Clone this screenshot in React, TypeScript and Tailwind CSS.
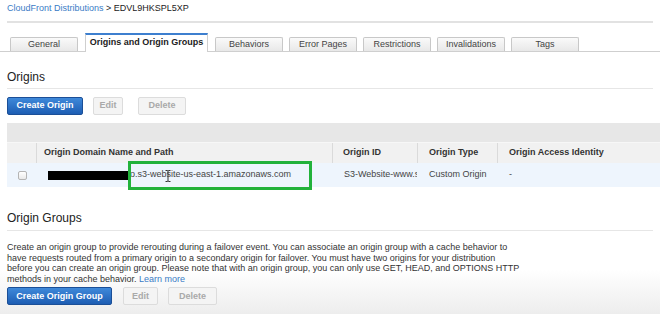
import { Fragment } from 'react';

const tabs = ['General', 'Origins and Origin Groups', 'Behaviors', 'Error Pages', 'Restrictions', 'Invalidations', 'Tags'];

function Tabs() {
  return (
    <div className="flex items-end h-[19px] border-b border-[#cfcfcf] pl-[10px] gap-[6px]">
      {tabs.map((tab, i) =>
        i === 1 ? (
          <div
            key={tab}
            className="w-[123px] h-[19px] -mb-px mx-[1px] flex items-center justify-center bg-white border-x border-[#cfcfcf] border-t-2 border-t-[#3d7fcf] font-bold text-[#222] pb-[1px]"
          >
            {tab}
          </div>
        ) : (
          <div
            key={tab}
            className="w-[68px] h-[14px] flex items-center justify-center border border-b-0 border-[#c8c8c8] rounded-t-[2px] bg-gradient-to-b from-[#fafafa] to-[#e8e8e8] text-[#444]"
          >
            {tab}
          </div>
        )
      )}
    </div>
  );
}

function Buttons({ create, widths }: { create: string; widths: [number, number, number, number, number] }) {
  // widths: create, gap, edit, gap, delete
  return (
    <div className="flex items-center h-[18px]">
      <button
        style={{ width: widths[0] }}
        className="h-[18px] rounded-[2px] border border-[#1b4f97] bg-gradient-to-b from-[#3f89da] to-[#1d5db3] text-white font-bold text-[9px]"
      >
        {create}
      </button>
      <button
        style={{ width: widths[2], marginLeft: widths[1] }}
        className="h-[18px] rounded-[2px] border border-[#dcdcdc] bg-[#f4f4f4] text-[#a9a9a9] font-bold text-[9px]"
      >
        Edit
      </button>
      <button
        style={{ width: widths[4], marginLeft: widths[3] }}
        className="h-[18px] rounded-[2px] border border-[#dcdcdc] bg-[#f4f4f4] text-[#a9a9a9] font-bold text-[9px]"
      >
        Delete
      </button>
    </div>
  );
}

function OriginsTable() {
  return (
    <div className="ml-[7px] mt-[8px]">
      <div className="h-[19px] bg-[#e7e7e7]" />
      <div className="flex h-[21px] bg-[#f1f1f1] font-bold text-[#333] border-t border-[#f7f7f7]">
        <div className="w-[30px] border-r border-[#dadada]" />
        <div className="w-[296px] border-r border-[#dadada] pl-[7px] flex items-center">Origin Domain Name and Path</div>
        <div className="w-[85px] border-r border-[#dadada] pl-[10px] flex items-center">Origin ID</div>
        <div className="w-[80px] border-r border-[#dadada] pl-[11px] flex items-center">Origin Type</div>
        <div className="flex-1 pl-[11px] flex items-center">Origin Access Identity</div>
      </div>
      <div className="flex h-[24px] bg-[#eef5fd] text-[#444]">
        <div className="w-[30px] flex items-center pl-[11px]">
          <span className="w-[9px] h-[9px] rounded-[2px] border border-[#b4b4b4] bg-gradient-to-b from-white to-[#e9e9e9]" />
        </div>
        <div className="w-[296px] relative flex items-center pl-[11px]">
          <span className="w-[82px] h-[9px] bg-black" />
          <span>o.s3-website-us-east-1.amazonaws.com</span>
          <div className="absolute left-[91px] top-[-2px] w-[184px] h-[29px] border-[3px] border-[#22b23b]" />
          <svg className="absolute left-[128px] top-[7px]" width="6" height="12" viewBox="0 0 6 12">
            <path d="M0.5 0.5h2l0.5 0.6 0.5-0.6h2M3 1v10M0.5 11.5h2l0.5-0.6 0.5 0.6h2" stroke="#333" strokeWidth="1" fill="none" />
          </svg>
        </div>
        <div className="w-[85px] pl-[11px] flex items-center overflow-hidden whitespace-nowrap">
          <span className="block w-[73px] overflow-hidden">S3-Website-www.s</span>
        </div>
        <div className="w-[80px] pl-[11px] flex items-center">Custom Origin</div>
        <div className="flex-1 pl-[11px] flex items-center">-</div>
      </div>
    </div>
  );
}

export default function App() {
  const groupText = [
    'Create an origin group to provide rerouting during a failover event. You can associate an origin group with a cache behavior to',
    'have requests routed from a primary origin to a secondary origin for failover. You must have two origins for your distribution',
    'before you can create an origin group. Please note that with an origin group, you can only use GET, HEAD, and OPTIONS HTTP',
  ];

  return (
    <div className="w-[660px] h-[314px] overflow-hidden bg-[linear-gradient(to_bottom,#ffffff_86%,#ededed_100%)] font-['Liberation_Sans',Arial,sans-serif] text-[9px] text-[#333]">
      {/* Breadcrumb */}
      <div className="h-[17px] px-[7px] flex items-center">
        <span className="text-[#3a7cc6]">CloudFront Distributions</span>
        <span className="text-[#222]">&nbsp;&gt; EDVL9HKSPL5XP</span>
      </div>
      <div className="mt-[4px] mx-[7px] h-[2px] bg-[#e2e2e2]" />

      <div className="mt-[10px]">
        <Tabs />
      </div>

      {/* Origins */}
      <div className="px-[7px]">
        <div className="mt-[17px] h-[16px] flex items-center text-[12px] text-[#222]">Origins</div>
        <div className="mt-[3px] border-t border-[#e6e6e6]" />
        <div className="mt-[8px]">
          <Buttons create="Create Origin" widths={[76, 10, 30, 15, 48]} />
        </div>
      </div>
      <OriginsTable />

      {/* Origin Groups */}
      <div className="px-[7px]">
        <div className="mt-[23px] h-[16px] flex items-center text-[12px] text-[#222]">Origin Groups</div>
        <div className="mt-[4px] border-t border-[#e6e6e6]" />
        <div className="mt-[11px] leading-[10.6px] text-[#333]">
          {groupText.map((line) => (
            <Fragment key={line}>
              <div className="whitespace-nowrap">{line}</div>
            </Fragment>
          ))}
          <div className="whitespace-nowrap">
            methods in your cache behavior. <span className="text-[#3a7cc6]">Learn more</span>
          </div>
        </div>
        <div className="mt-[3px]">
          <Buttons create="Create Origin Group" widths={[105, 11, 35, 10, 49]} />
        </div>
      </div>
    </div>
  );
}
